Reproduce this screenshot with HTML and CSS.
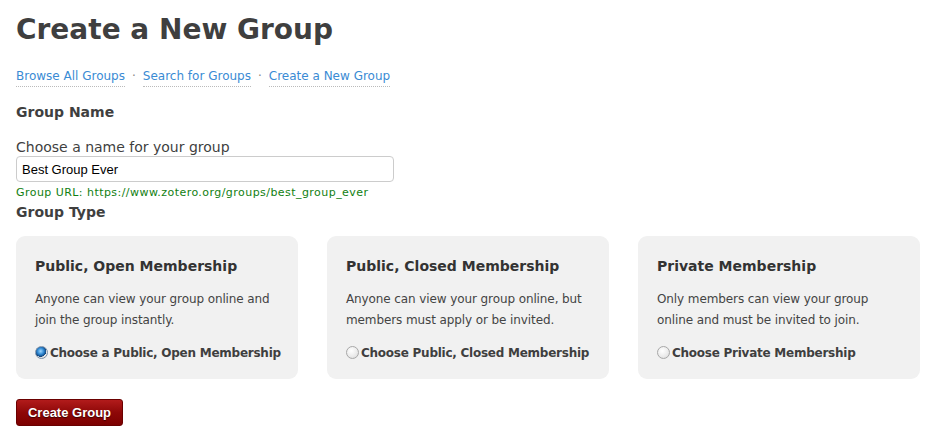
FILE: index.html
```html
<!DOCTYPE html>
<html>
<head>
<meta charset="utf-8">
<link rel="stylesheet" href="styles.css">
</head>
<body>
<div class="page">
  <h1 class="title">Create a New Group</h1>
  <nav class="subnav">
    <a href="#">Browse All Groups</a><span class="sep">·</span><a href="#">Search for Groups</a><span class="sep">·</span><a href="#">Create a New Group</a>
  </nav>
  <h2 class="section">Group Name</h2>
  <label class="field-label" for="name">Choose a name for your group</label>
  <input id="name" class="text-input" type="text" value="Best Group Ever">
  <div class="url">Group URL: https://www.zotero.org/groups/best_group_ever</div>
  <h2 class="section type">Group Type</h2>
  <div class="cards">
    <div class="card">
      <h3 class="card-title">Public, Open Membership</h3>
      <p class="card-text">Anyone can view your group online and join the group instantly.</p>
      <label class="choice"><input type="radio" name="type" class="radio" checked>Choose a Public, Open Membership</label>
    </div>
    <div class="card">
      <h3 class="card-title">Public, Closed Membership</h3>
      <p class="card-text">Anyone can view your group online, but members must apply or be invited.</p>
      <label class="choice"><input type="radio" name="type" class="radio">Choose Public, Closed Membership</label>
    </div>
    <div class="card">
      <h3 class="card-title">Private Membership</h3>
      <p class="card-text">Only members can view your group online and must be invited to join.</p>
      <label class="choice"><input type="radio" name="type" class="radio">Choose Private Membership</label>
    </div>
  </div>
  <button class="btn">Create Group</button>
</div>
</body>
</html>
```
FILE: styles.css
```css
html, body {
  margin: 0;
  padding: 0;
  background: #fff;
}
body {
  font-family: "DejaVu Sans", Verdana, sans-serif;
  color: #333;
}
.page {
  padding: 12px 8px 0 16px;
}
.title {
  margin: 0;
  font-size: 28px;
  line-height: 36px;
  font-weight: bold;
  color: #3f3f3f;
}
.subnav {
  margin-top: 20px;
  font-size: 12px;
  line-height: 16px;
  display: flex;
  align-items: flex-start;
}
.subnav a {
  color: #3a8bd4;
  text-decoration: none;
  border-bottom: 1px dotted #bbb;
  padding-bottom: 2px;
}
.sep {
  color: #888;
  margin: 0 7px;
}
.section {
  margin: 0;
  font-size: 14px;
  font-weight: bold;
  color: #3f3f3f;
  line-height: 18px;
  margin-top: 16px;
}
.section.type {
  margin-top: 3px;
}
.field-label {
  display: block;
  margin-top: 17px;
  font-size: 14px;
  line-height: 18px;
  color: #3f3f3f;
}
.text-input {
  display: block;
  box-sizing: border-box;
  width: 378px;
  height: 26px;
  margin: 0;
  padding: 2px 5px;
  font-family: "Liberation Sans", Arial, sans-serif;
  font-size: 13px;
  color: #000;
  border: 1px solid #ccc;
  border-radius: 4px;
  background: #fff;
}
.url {
  margin-top: 4px;
  font-size: 11px;
  line-height: 14px;
  color: #118011;
  letter-spacing: 0.45px;
}
.cards {
  display: grid;
  grid-template-columns: repeat(3, 282px);
  column-gap: 29px;
  margin-top: 15px;
}
.card {
  background: #f1f1f1;
  border-radius: 9px;
  height: 143px;
  box-sizing: border-box;
  padding: 21px 18px 0 19px;
}
.card-title {
  margin: 0;
  font-size: 14px;
  line-height: 18px;
  font-weight: bold;
  color: #333;
}
.card-text {
  margin: 14px 0 0;
  font-size: 12px;
  line-height: 21px;
  color: #444;
  letter-spacing: -0.1px;
}
.choice {
  display: flex;
  align-items: center;
  margin-top: 14px;
  font-size: 12px;
  font-weight: bold;
  color: #3f3f3f;
  line-height: 16px;
  white-space: nowrap;
  letter-spacing: -0.25px;
}
.radio {
  appearance: none;
  -webkit-appearance: none;
  width: 13px;
  height: 13px;
  margin: 0 2px 0 0;
  border-radius: 50%;
  border: 1px solid #a8a8a8;
  background: radial-gradient(circle at 40% 35%, #ffffff 0%, #eaeaea 60%, #d4d4d4 100%);
  box-sizing: border-box;
  position: relative;
  top: -1px;
  flex: none;
}
.radio:checked {
  border-color: #7a8ea6;
  background:
    radial-gradient(circle at 42% 38%, #9fd8ff 0%, #2d86d1 35%, #11457d 58%, transparent 62%),
    radial-gradient(circle at 40% 35%, #ffffff 0%, #eaeaea 60%, #d4d4d4 100%);
}
.btn {
  display: block;
  margin-top: 20px;
  width: 107px;
  height: 27px;
  border: 1px solid #6a0000;
  border-radius: 3px;
  background: linear-gradient(#b21b1b 0%, #8e0808 50%, #7c0000 100%);
  color: #fff;
  font-family: "Liberation Sans", Arial, sans-serif;
  font-weight: bold;
  font-size: 13px;
  text-shadow: 0 1px 1px #3a0000;
  padding: 0;
  cursor: pointer;
}
```
